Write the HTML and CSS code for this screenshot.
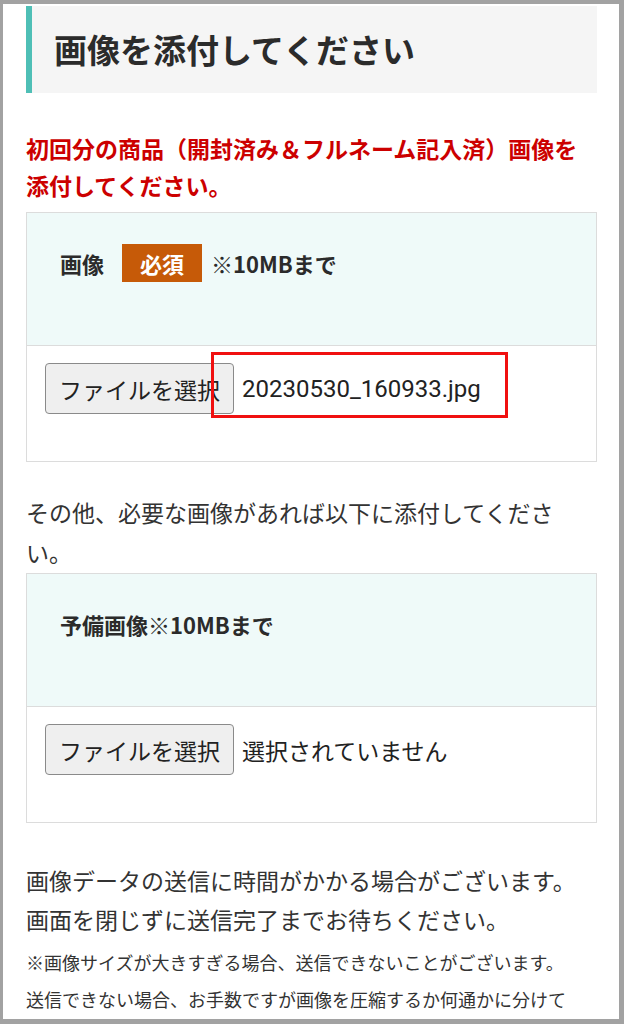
FILE: index.html
```html
<!DOCTYPE html>
<html lang="ja">
<head>
	<meta charset="UTF-8">
	<title>画像を添付してください</title>
	<link rel="stylesheet" href="styles.css">
</head>
<body>
	<div class="frame">
		<h2 class="sec-title">画像を添付してください</h2>

		<p class="notice">初回分の商品（開封済み＆フルネーム記入済）画像を添付してください。</p>

		<div class="upload-box">
			<div class="upload-head">
				<span class="label">画像</span>
				<span class="req">必須</span>
				<span class="label">※10MBまで</span>
			</div>
			<div class="upload-row">
				<button type="button" class="file-btn">ファイルを選択</button>
				<span class="file-name">20230530_160933.jpg</span>
				<div class="mark"></div>
			</div>
		</div>

		<p class="text">その他、必要な画像があれば以下に添付してください。</p>

		<div class="upload-box sub">
			<div class="upload-head">
				<span class="label">予備画像※10MBまで</span>
			</div>
			<div class="upload-row">
				<button type="button" class="file-btn">ファイルを選択</button>
				<span class="file-none">選択されていません</span>
			</div>
		</div>

		<p class="text info">画像データの送信に時間がかかる場合がございます。<br>画面を閉じずに送信完了までお待ちください。</p>
		<p class="small">※画像サイズが大きすぎる場合、送信できないことがございます。<br>送信できない場合、お手数ですが画像を圧縮するか何通かに分けて</p>
	</div>
</body>
</html>
```

FILE: styles.css
```css
body, h2, p{
	margin: 0;
	padding: 0;
}
body{
	font-family: "Noto Sans CJK JP", "Noto Sans", sans-serif;
	color: #333;
	background: #fff;
}
.frame{
	box-sizing: border-box;
	height: 1024px;
	overflow: hidden;
	border-style: solid;
	border-color: #a2a2a2;
	border-width: 4px 5px 5px 3px;
	padding: 2px 22px 0 23px;
}
.sec-title{
	padding: 19px 22px 20px;
	border-left: 6px solid #4fbfb6;
	background: #f5f5f5;
	font-size: 33px;
	line-height: 48px;
	font-weight: bold;
	color: #2b2b2b;
}
.notice{
	margin-top: 37px;
	font-size: 23px;
	line-height: 37px;
	font-weight: bold;
	color: #cc0000;
}
	.upload-box{
		margin-top: 8px;
		border: 1px solid #dcdcdc;
	}
	.upload-box.sub{
		margin-top: 1px;
	}
	.upload-head{
		display: flex;
		align-items: center;
		gap: 9px;
		height: 38px;
		padding: 31px 33px 63px;
		background: #effaf9;
		border-bottom: 1px solid #dcdcdc;
	}
	.label{
		font-size: 22px;
		font-weight: bold;
		color: #2b2b2b;
	}
	.req{
		margin-left: 9px;
		padding: 0 18px;
		height: 38px;
		line-height: 38px;
		background: #c65a08;
		color: #fff;
		font-size: 22px;
		font-weight: bold;
	}
	.upload-row{
		position: relative;
		display: flex;
		align-items: center;
		gap: 8px;
		padding: 17px 18px 47px;
	}
	.file-btn{
		height: 51px;
		padding: 0 13px;
		border: 1px solid #8a8a8a;
		border-radius: 4px;
		background: #efefef;
		color: #222;
		font-family: "Noto Sans CJK JP", sans-serif;
		font-size: 23px;
	}
	.file-name{
		font-family: Roboto, "Noto Sans CJK JP", sans-serif;
		font-size: 24px;
		color: #222;
	}
	.file-none{
		font-size: 23px;
		color: #222;
	}
	/* 赤枠（注釈） */
	.mark{
		position: absolute;
		left: 184px;
		top: 6px;
		box-sizing: border-box;
		width: 297px;
		height: 66px;
		border: 3px solid #f01010;
	}
.text{
	margin-top: 30px;
	font-size: 23px;
	line-height: 40px;
}
.info{
	margin-top: 38px;
	line-height: 39px;
}
.small{
	margin-top: 5px;
	font-size: 18px;
	line-height: 37px;
}
```
